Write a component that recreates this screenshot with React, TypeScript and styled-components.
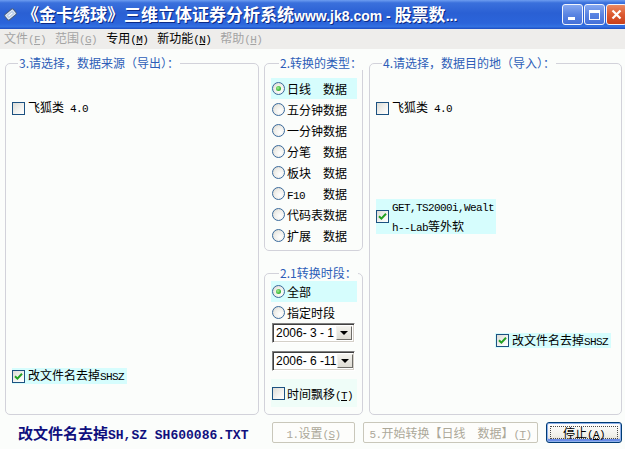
import React from 'react';
import styled, { createGlobalStyle, css } from 'styled-components';

const CJK = `"Noto Sans CJK SC", "Noto Sans", sans-serif`;
const HALF = `"Liberation Mono", "DejaVu Sans Mono", monospace`;

const GlobalStyle = createGlobalStyle`
  html, body { margin: 0; padding: 0; background: #fbfdfb; }
  *, *::before, *::after { box-sizing: border-box; }
`;

const MENU = [
  { label: '文件', key: 'F', disabled: true },
  { label: '范围', key: 'G', disabled: true },
  { label: '专用', key: 'M', disabled: false },
  { label: '新功能', key: 'N', disabled: false },
  { label: '帮助', key: 'H', disabled: true },
];

// half-width latin, roughly the 6px advance of the original bitmap font
const Half = styled.span`
  font-family: ${HALF};
  font-size: 11px;
  letter-spacing: -0.6px;
  white-space: pre;
`;

const TYPES: { label: React.ReactNode; on?: boolean }[] = [
  { label: '日线　数据', on: true },
  { label: '五分钟数据' },
  { label: '一分钟数据' },
  { label: '分笔　数据' },
  { label: '板块　数据' },
  { label: <><Half>F10   </Half>数据</> },
  { label: '代码表数据' },
  { label: '扩展　数据' },
];

const CheckMark = () => (
  <svg width="9" height="9" viewBox="0 0 9 9">
    <path d="M1 4.2 L3.4 6.6 L8 1.8" fill="none" stroke="#21a121" strokeWidth="2" />
  </svg>
);

const CheckBox = ({ on }: { on?: boolean }) => <Box>{on && <CheckMark />}</Box>;

const AppIcon = () => (
  <svg width="15" height="15" viewBox="0 0 15 15" style={{ flex: 'none' }}>
    <g transform="rotate(-40 7.5 7.5)">
      <rect x="2" y="4" width="11" height="7" rx="1.5" fill="#e9eff8" stroke="#4a5f82" strokeWidth="1" />
      <rect x="3.5" y="5.5" width="8" height="4" fill="#b9cdea" />
      <line x1="5" y1="7.5" x2="10" y2="7.5" stroke="#fff" strokeWidth="1" />
    </g>
  </svg>
);

export default function App() {
  return (
    <>
      <GlobalStyle />
      <Window>
        <TitleBar>
          <AppIcon />
          <TitleText>
            《金卡绣球》三维立体证券分析系统<TitleLatin>www.jk8.com - </TitleLatin>股票数<TitleLatin>...</TitleLatin>
          </TitleText>
          <WinButtons>
            <WinBtn aria-label="minimize">
              <MinGlyph />
            </WinBtn>
            <WinBtn aria-label="maximize">
              <MaxGlyph />
            </WinBtn>
            <WinBtn $close aria-label="close">
              <svg width="11" height="11" viewBox="0 0 11 11">
                <path d="M1.5 1.5 L9.5 9.5 M9.5 1.5 L1.5 9.5" stroke="#fff" strokeWidth="2.2" />
              </svg>
            </WinBtn>
          </WinButtons>
        </TitleBar>

        <MenuBar>
          {MENU.map((m) => (
            <MenuItem key={m.key} $disabled={m.disabled}>
              {m.label}
              <Half>
                (<u>{m.key}</u>)
              </Half>
            </MenuItem>
          ))}
        </MenuBar>

        <Body>
          <Columns>
            <Group $w={254} $pad="30px 6px 30px 6px">
              <Legend>3.请选择，数据来源（导出）：</Legend>
              <CheckRow>
                <CheckBox />
                <Label>飞狐类<Half> 4.0</Half></Label>
              </CheckRow>
              <CheckRow $hl $push>
                <CheckBox on />
                <Label>改文件名去掉<Half>SHSZ</Half></Label>
              </CheckRow>
            </Group>

            <MidCol>
              <Group $h={195} $pad="8px 5px 0 6px">
                <Legend $indent={8}>2.转换的类型：</Legend>
                {TYPES.map((t, i) => (
                  <RadioRow key={i} $hl={t.on}>
                    <Radio $on={t.on} />
                    <Label>{t.label}</Label>
                  </RadioRow>
                ))}
              </Group>

              <Group $grow $pad="1px 5px 0 6px">
                <Legend $indent={8}>2.1转换时段：</Legend>
                <RadioRow $hl>
                  <Radio $on />
                  <Label>全部</Label>
                </RadioRow>
                <RadioRow>
                  <Radio />
                  <Label>指定时段</Label>
                </RadioRow>
                <Combo>
                  <ComboText>2006- 3 - 1</ComboText>
                  <ComboArrow />
                </Combo>
                <Combo $gap={8}>
                  <ComboText>2006- 6 -11</ComboText>
                  <ComboArrow />
                </Combo>
                <DriftRow>
                  <CheckBox />
                  <Label>时间飘移<Half>(<u>T</u>)</Half></Label>
                </DriftRow>
              </Group>
            </MidCol>

            <Group $w={253} $pad="30px 10px 0 6px">
              <Legend>4.请选择，数据目的地（导入）：</Legend>
              <CheckRow>
                <CheckBox />
                <Label>飞狐类<Half> 4.0</Half></Label>
              </CheckRow>
              <TargetBlock>
                <CheckBox on />
                <TargetText>
                  <Half>GET,TS2000i,Wealt</Half>
                  <br />
                  <Half>h--Lab</Half>等外软
                </TargetText>
              </TargetBlock>
              <CheckRow $hl $end>
                <CheckBox on />
                <Label>改文件名去掉<Half>SHSZ</Half></Label>
              </CheckRow>
            </Group>
          </Columns>

          <Footer>
            <FileName>
              改文件名去掉<FileLatin>SH,SZ SH600086.TXT</FileLatin>
            </FileName>
            <PushButton $w={83} disabled>
              <Half>1.</Half>设置<Half>(<u>S</u>)</Half>
            </PushButton>
            <PushButton $w={175} disabled>
              <Half>5.</Half>开始转换【日线　数据】<Half>(<u>T</u>)</Half>
            </PushButton>
            <PushButton $w={76} $primary>
              停止<Half>(<u>A</u>)</Half>
            </PushButton>
          </Footer>
        </Body>
      </Window>
    </>
  );
}

const Window = styled.div`
  width: 625px;
  height: 449px;
  display: flex;
  flex-direction: column;
  overflow: hidden;
  font-family: ${CJK};
  font-size: 12px;
  color: #000;
  background: #fbfdfb;
`;

const TitleBar = styled.div`
  height: 29px;
  flex: none;
  display: flex;
  align-items: center;
  padding-left: 3px;
  color: #fff;
  background: linear-gradient(
    180deg,
    #6d9df0 0%,
    #3a70dc 10%,
    #2a60d4 45%,
    #2b64da 80%,
    #3371e2 92%,
    #1d4cc0 100%
  );
`;

const TitleText = styled.div`
  flex: 1;
  min-width: 0;
  margin-left: 4px;
  font-size: 17px;
  font-weight: 700;
  line-height: 29px;
  white-space: nowrap;
  overflow: hidden;
  text-shadow: 1px 1px 0 #0c2a86;
`;

const TitleLatin = styled.span`
  font-family: 'Liberation Sans', Arial, sans-serif;
  font-size: 14px;
`;

const WinButtons = styled.div`
  display: flex;
  gap: 1px;
  margin-right: -2px;
  flex: none;
`;

const WinBtn = styled.div<{ $close?: boolean }>`
  width: 21px;
  height: 21px;
  border: 1px solid #f2f5fc;
  border-radius: 3px;
  display: flex;
  align-items: center;
  justify-content: center;
  background: ${({ $close }) =>
    $close
      ? 'linear-gradient(180deg, #ec8a62 0%, #dc5a30 50%, #c8401c 100%)'
      : 'linear-gradient(180deg, #86a8f0 0%, #5a84e2 50%, #4470d8 100%)'};
`;

const MinGlyph = styled.span`
  width: 7px;
  height: 3px;
  background: #fff;
  margin-top: 8px;
  margin-right: 3px;
`;

const MaxGlyph = styled.span`
  width: 11px;
  height: 10px;
  border: 1px solid #fff;
  border-top-width: 3px;
`;

const MenuBar = styled.div`
  height: 20px;
  flex: none;
  display: flex;
  align-items: center;
  gap: 1px;
  background: #eeedeb;
`;

const MenuItem = styled.div<{ $disabled?: boolean }>`
  padding: 0 4px;
  line-height: 20px;
  color: ${({ $disabled }) => ($disabled ? '#a4a4a4' : '#000')};
  white-space: nowrap;
`;

const Body = styled.div`
  flex: 1;
  display: flex;
  flex-direction: column;
`;

const Columns = styled.div`
  height: 366px;
  flex: none;
  display: flex;
  padding: 7px 0 0 5px;
`;

const MidCol = styled.div`
  width: 99px;
  flex: none;
  display: flex;
  flex-direction: column;
  gap: 15px;
  margin: 0 6px 0 5px;
`;

const Group = styled.fieldset<{ $w?: number; $h?: number; $grow?: boolean; $pad: string }>`
  margin: 0;
  min-width: 0;
  padding: ${({ $pad }) => $pad};
  border: 1px solid #d2d2da;
  border-radius: 5px;
  display: flex;
  flex-direction: column;
  align-items: flex-start;
  ${({ $w }) => $w && css`width: ${$w}px; flex: none;`}
  ${({ $h }) => $h && css`height: ${$h}px; flex: none;`}
  ${({ $grow }) => $grow && css`flex: 1;`}
`;

const Legend = styled.legend<{ $indent?: number }>`
  padding: 0 1px;
  margin-left: ${({ $indent }) => $indent ?? 6}px;
  font-size: 12px;
  line-height: 14px;
  color: #2d5db8;
  white-space: nowrap;
`;

const Label = styled.span`
  white-space: pre;
`;

const Box = styled.span`
  width: 13px;
  height: 13px;
  flex: none;
  border: 1px solid #1c5180;
  background: linear-gradient(135deg, #dcdcd6 0%, #f4f4f1 60%, #ffffff 100%);
  display: flex;
  align-items: center;
  justify-content: center;
`;

const CheckRow = styled.label<{ $hl?: boolean; $push?: boolean; $end?: boolean }>`
  height: 16px;
  display: flex;
  align-items: center;
  gap: 3px;
  padding-right: 3px;
  line-height: 16px;
  white-space: nowrap;
  background: ${({ $hl }) => ($hl ? '#d6fdfd' : 'transparent')};
  ${({ $push }) => $push && css`margin-top: auto;`}
  ${({ $end }) => $end && css`align-self: flex-end; margin-top: 99px; padding-left: 1px; height: 15px;`}
`;

const TargetBlock = styled.label`
  margin-top: 83px;
  height: 35px;
  display: flex;
  align-items: center;
  gap: 3px;
  padding-right: 2px;
  background: #d6fdfd;
`;

const TargetText = styled.span`
  line-height: 17px;
  white-space: nowrap;
`;

const RadioRow = styled.label<{ $hl?: boolean }>`
  width: 86px;
  height: 21px;
  flex: none;
  display: flex;
  align-items: center;
  gap: 2px;
  padding-left: 1px;
  background: ${({ $hl }) => ($hl ? '#d6fdfd' : 'transparent')};
`;

const Radio = styled.span<{ $on?: boolean }>`
  width: 13px;
  height: 13px;
  flex: none;
  border-radius: 50%;
  border: 1px solid #3a6a9c;
  background: radial-gradient(circle at 65% 65%, #ffffff 0%, #eeede8 55%, #d4d1c6 100%);
  display: flex;
  align-items: center;
  justify-content: center;
  &::after {
    content: '';
    width: 5px;
    height: 5px;
    border-radius: 50%;
    background: ${({ $on }) =>
      $on ? 'radial-gradient(circle at 40% 40%, #a6ee94 0%, #3cb83a 60%, #1f8f1f 100%)' : 'transparent'};
  }
`;

const Combo = styled.div<{ $gap?: number }>`
  width: 83px;
  height: 20px;
  flex: none;
  margin: ${({ $gap }) => $gap ?? 0}px 0 0 1px;
  display: flex;
  align-items: stretch;
  background: #fff;
  border: 1px solid;
  border-color: #808080 #ffffff #ffffff #808080;
  box-shadow: inset 1px 1px 0 #404040, inset -1px -1px 0 #d4d0c8;
  padding: 2px;
`;

const ComboText = styled.span`
  flex: 1;
  font-family: 'Liberation Sans', Arial, sans-serif;
  font-size: 12px;
  line-height: 14px;
  padding-left: 1px;
  white-space: pre;
`;

const ComboArrow = styled.span`
  width: 16px;
  flex: none;
  border: 1px solid;
  border-color: #f4f3ee #6e6d68 #6e6d68 #f4f3ee;
  background: linear-gradient(180deg, #f2f1ec 0%, #dedcd4 100%);
  display: flex;
  align-items: center;
  justify-content: center;
  &::after {
    content: '';
    border-left: 4px solid transparent;
    border-right: 4px solid transparent;
    border-top: 4px solid #000;
  }
`;

const DriftRow = styled.label`
  width: 86px;
  height: 28px;
  flex: none;
  margin-top: 8px;
  display: flex;
  align-items: center;
  gap: 2px;
  padding-left: 1px;
  white-space: nowrap;
  background: #effdf8;
`;

const Footer = styled.div`
  flex: 1;
  display: flex;
  align-items: center;
  padding-left: 18px;
`;

const FileName = styled.div`
  width: 254px;
  flex: none;
  font-size: 15px;
  font-weight: 700;
  color: #10107e;
  white-space: pre;
`;

const FileLatin = styled.span`
  font-family: ${HALF};
  font-size: 13px;
`;

const PushButton = styled.button<{ $w: number; $primary?: boolean }>`
  width: ${({ $w }) => $w}px;
  height: 21px;
  flex: none;
  margin-right: 8px;
  padding: 0;
  position: relative;
  font-family: ${CJK};
  font-size: 12px;
  line-height: 19px;
  white-space: nowrap;
  border-radius: 2px;
  border: 1px solid #c9c7ba;
  background: #fdfdfb;
  color: #aca899;
  ${({ $primary }) =>
    $primary &&
    css`
      margin-right: 0;
      color: #000;
      border-color: #003c74;
      border-radius: 3px;
      background: linear-gradient(180deg, #ffffff 0%, #f1f0ea 65%, #dcd8cc 100%);
      box-shadow: inset 0 0 0 1px #8fb0ea, inset 0 -2px 0 1px #6a8ce6;
      &::after {
        content: '';
        position: absolute;
        inset: 3px;
        border: 1px dotted #4a4a4a;
      }
    `}
`;
